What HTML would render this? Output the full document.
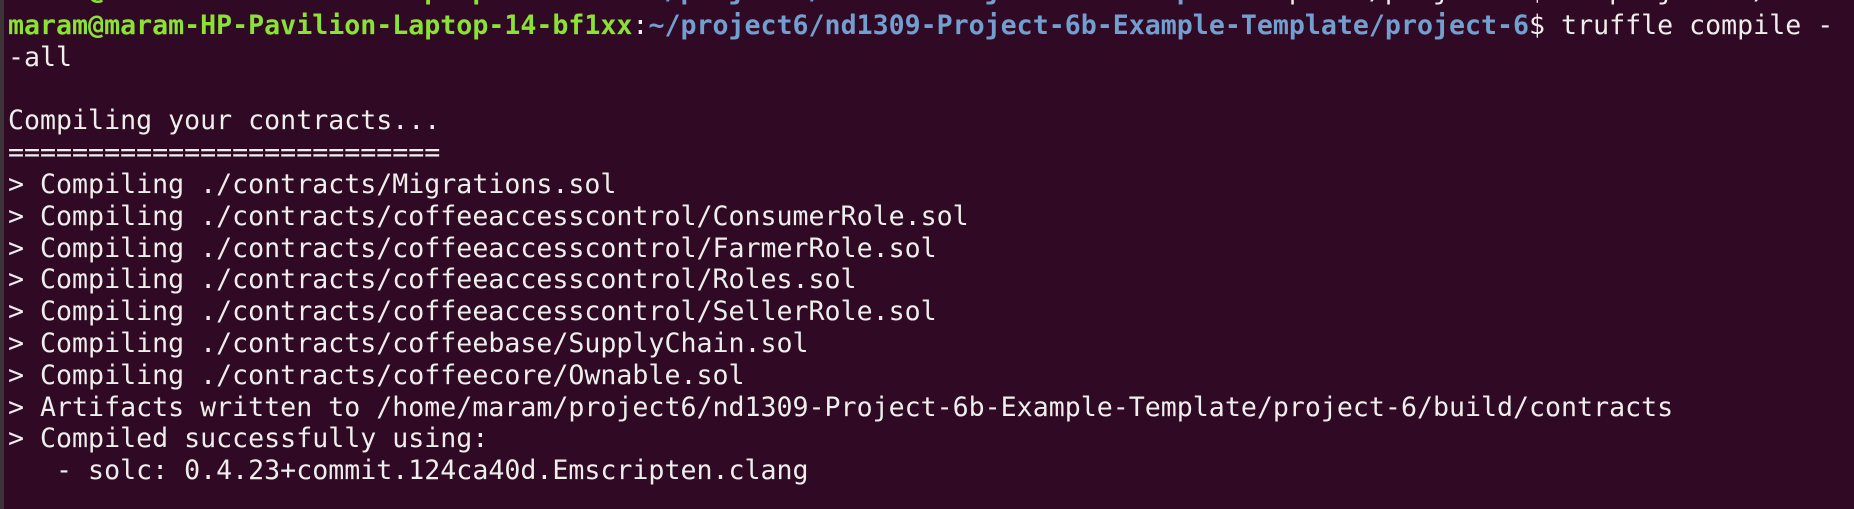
<!DOCTYPE html>
<html><head><meta charset="utf-8"><style>
html,body{margin:0;padding:0;}
body{width:1854px;height:509px;overflow:hidden;background:#300a24;position:relative;}
.bar{position:absolute;left:0;top:0;width:4px;height:509px;background:#3d3438;}
pre{position:absolute;left:8px;margin:0;font-family:"DejaVu Sans Mono","Liberation Mono",monospace;font-size:26.6px;line-height:31.8px;color:#eeeeec;white-space:pre;}
.g{color:#8ae234;font-weight:bold;}
.b{color:#729fcf;font-weight:bold;}
</style></head><body><div class="bar"></div><pre style="top:-25px"><span class="g">maram@maram-HP-Pavilion-Laptop-14-bf1xx</span>:<span class="b">~/project6/nd1309-Project-6b-Example</span>-Template/project-6$ cd project-6/</pre><pre style="top:10px"><span class="g">maram@maram-HP-Pavilion-Laptop-14-bf1xx</span>:<span class="b">~/project6/nd1309-Project-6b-Example-Template/project-6</span>$ truffle compile -
-all

Compiling your contracts...
===========================
&gt; Compiling ./contracts/Migrations.sol
&gt; Compiling ./contracts/coffeeaccesscontrol/ConsumerRole.sol
&gt; Compiling ./contracts/coffeeaccesscontrol/FarmerRole.sol
&gt; Compiling ./contracts/coffeeaccesscontrol/Roles.sol
&gt; Compiling ./contracts/coffeeaccesscontrol/SellerRole.sol
&gt; Compiling ./contracts/coffeebase/SupplyChain.sol
&gt; Compiling ./contracts/coffeecore/Ownable.sol
&gt; Artifacts written to /home/maram/project6/nd1309-Project-6b-Example-Template/project-6/build/contracts
&gt; Compiled successfully using:
   - solc: 0.4.23+commit.124ca40d.Emscripten.clang
</pre></body></html>
